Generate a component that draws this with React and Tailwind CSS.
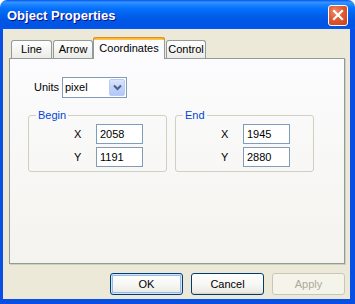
import React from "react";

function Tab({ label, selected, className }) {
  if (selected) {
    return (
      <div
        className={`relative z-10 -mb-px h-[22px] flex flex-col rounded-t-[3px] border-x border-[#919B9C] bg-[#FCFCFE] ${className}`}
      >
        <div className="h-[3px] rounded-t-[3px] bg-[linear-gradient(180deg,#E68B2C_0%,#FFC83C_35%,#FFC73C_100%)] -mx-px border-x border-t border-[#E68B2C]" />
        <div className="flex-1 flex items-center justify-center text-black leading-none pb-[2px]">{label}</div>
      </div>
    );
  }
  return (
    <div
      className={`h-[18px] flex items-center justify-center rounded-t-[3px] border-x border-t border-[#919B9C] bg-[linear-gradient(180deg,#FFFFFF_0%,#F7F7F5_40%,#ECEBE6_100%)] text-black leading-none ${className}`}
    >
      {label}
    </div>
  );
}

function Field({ label, value, first }) {
  return (
    <div className={`flex items-center pl-[45px] ${first ? "mt-[2px]" : "mt-[3px]"}`}>
      <span className="w-[22px] text-black">{label}</span>
      <div className="w-[47px] h-[20px] border border-[#7F9DB9] bg-white flex items-center pl-[3px] text-black">
        {value}
      </div>
    </div>
  );
}

function Group({ title, x, y }) {
  return (
    <fieldset className="w-[139px] h-[64px] border border-[#D0D0BF] rounded-[3px] m-0 p-0 min-w-0">
      <legend className="ml-[7px] px-[2px] leading-[14px] text-[#0046D5]">{title}</legend>
      <Field label="X" value={x} first />
      <Field label="Y" value={y} />
    </fieldset>
  );
}

function Button({ children, def, disabled }) {
  return (
    <div
      className={`w-[73px] h-[22px] rounded-[3px] border flex items-center justify-center ${
        disabled
          ? "border-[#C9C7BA] bg-[#F5F4EA] text-[#ACA899]"
          : "border-[#003C74] bg-[linear-gradient(180deg,#FFFFFF_0%,#F7F7F4_50%,#ECEBE6_90%,#D6D0C5_100%)] text-black"
      } ${def ? "shadow-[inset_0_0_0_1px_#CEE7FF,inset_0_0_0_2px_#98B8EA]" : ""}`}
    >
      {children}
    </div>
  );
}

export default function App() {
  return (
    <div className="w-[355px] h-[304px] flex flex-col bg-white font-['Liberation_Sans',Arial,sans-serif] text-[11px] overflow-hidden">
      {/* Title bar */}
      <div className="h-[29px] shrink-0 rounded-t-[7px] bg-[linear-gradient(180deg,#0058EE_0%,#3A93FF_8%,#288EFF_12%,#127DFF_20%,#036FFC_32%,#0262EE_50%,#0057E5_70%,#0054E3_88%,#0055EB_94%,#005BF5_100%)] flex items-center justify-between pl-[7px] pr-[7px]">
        <span className="text-white font-bold text-[13px] leading-none [text-shadow:1px_1px_0_#0F1089] pt-[1px]">
          Object Properties
        </span>
        <div className="w-[20px] h-[21px] rounded-[3px] border border-white bg-[radial-gradient(circle_at_35%_30%,#F08B6B_0%,#E05A32_45%,#C8401A_100%)] flex items-center justify-center mt-[1px]">
          <svg width="12" height="12" viewBox="0 0 12 12">
            <path d="M2 2 L10 10 M10 2 L2 10" stroke="white" strokeWidth="2.2" strokeLinecap="square" />
          </svg>
        </div>
      </div>

      {/* Body */}
      <div className="flex-1 flex flex-col bg-[#ECE9D8] border-l-[3px] border-r-[5px] border-b-[5px] border-[#0A4FE3] pl-[6px] pr-[5px] pt-[7px]">
        {/* Tabs */}
        <div className="flex items-end h-[22px] pl-[2px]">
          <Tab label="Line" className="w-[41px]" />
          <Tab label="Arrow" className="w-[40px] ml-[1px]" />
          <Tab label="Coordinates" selected className="w-[72px]" />
          <Tab label="Control" className="w-[40px] ml-px" />
        </div>

        {/* Panel */}
        <div className="h-[206px] border border-[#919B9C] shadow-[1px_1px_0_#D0CEBF] bg-[linear-gradient(180deg,#FCFCFE_0%,#F4F3EE_100%)] flex flex-col pl-[18px]">
          <div className="flex items-center mt-[18px] pl-[6px]">
            <span className="w-[28px] text-black">Units</span>
            <div className="w-[65px] h-[21px] border border-[#7F9DB9] bg-white flex items-center justify-between pl-[2px] pr-px">
              <span className="text-black">pixel</span>
              <div className="w-[16px] h-[17px] rounded-[2px] border border-[#B8CCF6] bg-[linear-gradient(180deg,#DCE6FD_0%,#C1D3FB_50%,#B3C8F7_100%)] flex items-center justify-center">
                <svg width="9" height="7" viewBox="0 0 9 7">
                  <path d="M1 1.5 L4.5 5 L8 1.5" fill="none" stroke="#4D6185" strokeWidth="2" />
                </svg>
              </div>
            </div>
          </div>

          <div className="flex gap-[8px] mt-[10px]">
            <Group title="Begin" x="2058" y="1191" />
            <Group title="End" x="1945" y="2880" />
          </div>
        </div>

        {/* Buttons */}
        <div className="flex justify-end gap-[8px] mt-[9px]">
          <Button def>OK</Button>
          <Button>Cancel</Button>
          <Button disabled>Apply</Button>
        </div>
      </div>
    </div>
  );
}
